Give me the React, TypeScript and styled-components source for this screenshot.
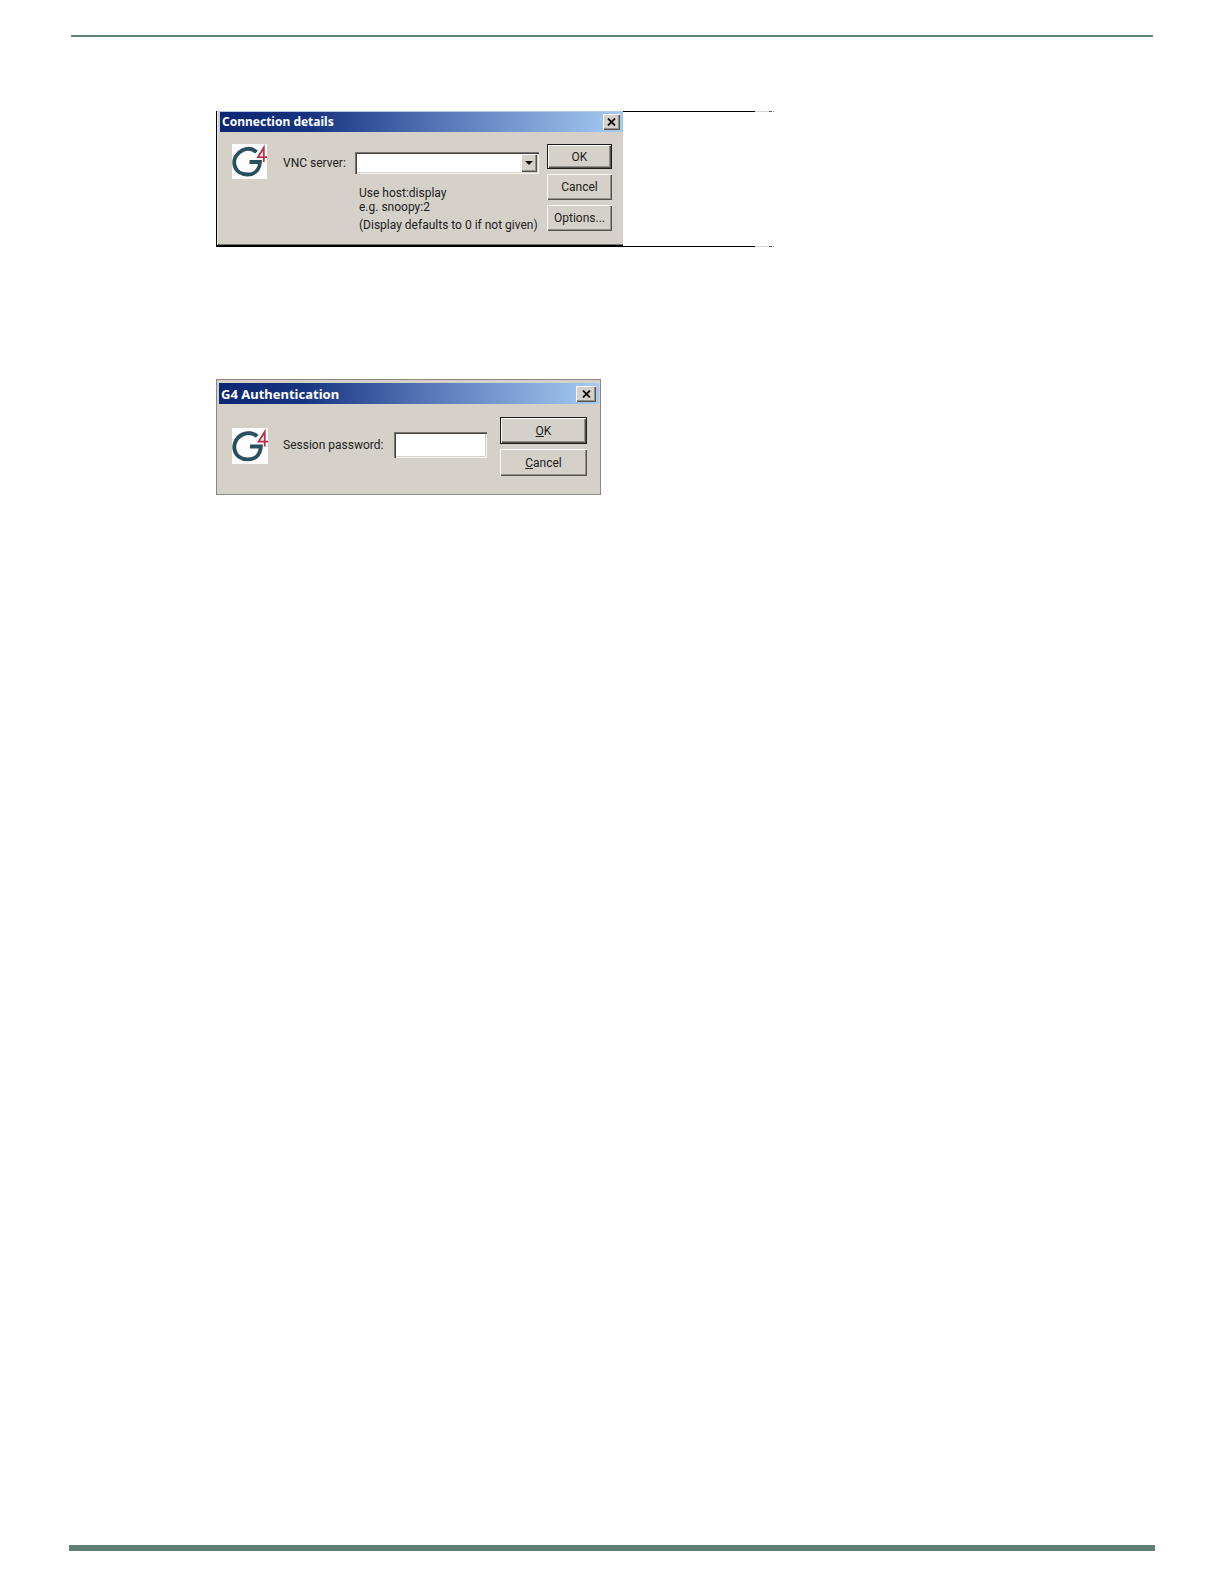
import React from "react";
import styled, { createGlobalStyle } from "styled-components";

const GlobalStyle = createGlobalStyle`
  *, *::before, *::after { box-sizing: border-box; }
  body { margin: 0; background: #fff; }
`;

const Page = styled.div`
  display: flex;
  flex-direction: column;
  min-height: 100vh;
  padding: 35px 69px 33px;
  color: #1c1c1c;
  font-family: Roboto, "Liberation Sans", sans-serif;
  font-size: 12px;
  line-height: 14px;
`;

const HeaderRule = styled.header`
  height: 2px;
  margin: 0 2px;
  background: #5f8473;
`;

const FooterRule = styled.footer`
  height: 6px;
  background: #5f7f75;
`;

const Content = styled.main`
  display: flex;
  flex: 1;
  flex-direction: column;
  align-items: flex-start;
  gap: 132px;
  padding: 74px 0 74px 147px;
`;

const Figure = styled.section`
  display: flex;
`;

const FigureEdge = styled.div`
  --line: linear-gradient(90deg, #000 0 132px, #d4d4d4 132px 146px, #555 146px 149px, #fff 149px 150px, #888 150px);
  width: 151px;
  background: var(--line) top / 100% 1px no-repeat, var(--line) bottom / 100% 1px no-repeat;
`;

const Dialog = styled.form<{ $framed?: boolean }>`
  display: flex;
  flex-direction: column;
  width: ${(p) => (p.$framed ? "407px" : "385px")};
  padding: ${(p) => (p.$framed ? "1px 0 0 3px" : "3px 1px 0 2px")};
  background: #d5d1c9;
  border: 1px solid #8a8784;
  ${(p) =>
    p.$framed &&
    `
    border-color: #000;
    border-width: 0 0 2px 1px;
    box-shadow: inset 1px 0 #eceae6, inset 0 -1px #77746f, inset 0 1px #b9c6dc;
  `}
`;

const TitleBar = styled.div<{ $height: number }>`
  display: flex;
  align-items: center;
  justify-content: space-between;
  height: ${(p) => p.$height}px;
  padding: 0 3px 0 2px;
  background: linear-gradient(90deg, #0c2672 0%, #173480 22%, #5876b8 55%, #a5cbf3 100%);
`;

const Title = styled.h2<{ $size: number }>`
  margin: 0;
  color: #fff;
  font-family: "Noto Sans", "Open Sans", sans-serif;
  font-size: ${(p) => p.$size}px;
  font-weight: 700;
  line-height: 16px;
`;

const bevel = `
  border: 0;
  background: #d5d1c9;
  box-shadow: inset 1px 1px #fbfaf8, inset -1px -1px #55524e, inset -2px -2px #94918b;
`;

const CloseButton = styled.button<{ $width: number }>`
  ${bevel}
  display: grid;
  place-items: center;
  width: ${(p) => p.$width}px;
  height: 16px;
  padding: 0;
`;

const PushButton = styled.button<{ $primary?: boolean; $height: number }>`
  ${bevel}
  height: ${(p) => p.$height}px;
  padding: 0;
  color: inherit;
  font: inherit;
  ${(p) =>
    p.$primary &&
    `
    border: 1px solid #1e1c1a;
  `}
`;

const ButtonStack = styled.div<{ $width: number }>`
  display: flex;
  flex-direction: column;
  gap: 5px;
  width: ${(p) => p.$width}px;
  margin-left: auto;
`;

const ConnectionBody = styled.div`
  display: flex;
  align-items: flex-start;
  padding: 12px 11px 13px 12px;
`;

const AuthBody = styled.div`
  display: flex;
  align-items: flex-start;
  padding: 13px 12px 18px 13px;
`;

const LogoSlot = styled.div<{ $top: number }>`
  display: flex;
  padding-top: ${(p) => p.$top}px;
`;

const FieldArea = styled.div`
  display: grid;
  grid-template-columns: 72px 184px;
  row-gap: 12px;
  padding: 8px 0 0 16px;
`;

const PasswordArea = styled.div`
  display: grid;
  grid-template-columns: 111px 93px;
  padding: 15px 0 0 15px;
`;

const Label = styled.label`
  align-self: center;
  white-space: nowrap;
`;

const sunken = `
  border: 0;
  border-radius: 0;
  outline: 0;
  background: #fff;
  box-shadow: inset 1px 1px #77746f, inset 2px 2px #45423f, inset -1px -1px #f6f5f2, inset -2px -2px #d5d1c9;
`;

const Combo = styled.div`
  position: relative;
  display: flex;
`;

const ServerSelect = styled.select`
  ${sunken}
  appearance: none;
  width: 100%;
  height: 22px;
  padding: 0 20px 0 5px;
  font: inherit;
`;

const ComboArrow = styled.span`
  ${bevel}
  position: absolute;
  top: 2px;
  right: 2px;
  bottom: 2px;
  display: grid;
  place-items: center;
  width: 16px;
  pointer-events: none;
`;

const PasswordInput = styled.input`
  ${sunken}
  width: 100%;
  height: 26px;
  padding: 0 5px;
  font: inherit;
`;

const Hint = styled.div`
  grid-column: 2;
  padding-left: 4px;
  white-space: nowrap;
`;

const HintLine = styled.p`
  margin: 0;

  &:last-child {
    margin-top: 4px;
  }
`;

function Logo({ size }: { size: number }) {
  return (
    <svg width={size} height={size} viewBox="0 0 35 35" role="img" aria-label="G4">
      <rect width="35" height="35" fill="#fdfdfd" />
      <path
        d="M24.5 8.2C21 4.8 15.5 4 10.5 6.2C4.5 9 1.2 15 2.5 21C3.7 27 9 30.5 15.5 30.5C22 30.5 27.5 26.5 28 18H17.5"
        fill="none"
        stroke="#29505f"
        strokeWidth="3.8"
      />
      <path d="M31.8 18V3.6L26 13.2H35" fill="none" stroke="#b9304a" strokeWidth="1.8" />
    </svg>
  );
}

function CrossIcon() {
  return (
    <svg width="9" height="8" viewBox="0 0 9 8" aria-hidden="true">
      <path d="M1 0.5L8 7.5M8 0.5L1 7.5" stroke="#111" strokeWidth="1.8" />
    </svg>
  );
}

export default function App() {
  return (
    <>
      <GlobalStyle />
      <Page>
        <HeaderRule />
        <Content>
          <Figure>
            <Dialog $framed aria-labelledby="connection-title">
              <TitleBar $height={20}>
                <Title id="connection-title" $size={12}>Connection details</Title>
                <CloseButton type="button" $width={17} aria-label="Close">
                  <CrossIcon />
                </CloseButton>
              </TitleBar>
              <ConnectionBody>
                <LogoSlot $top={0}>
                  <Logo size={35} />
                </LogoSlot>
                <FieldArea>
                  <Label htmlFor="server">VNC server:</Label>
                  <Combo>
                    <ServerSelect id="server" defaultValue="">
                      <option value="" />
                    </ServerSelect>
                    <ComboArrow>
                      <svg width="8" height="4" viewBox="0 0 8 4" aria-hidden="true">
                        <path d="M0 0H8L4 4Z" fill="#111" />
                      </svg>
                    </ComboArrow>
                  </Combo>
                  <Hint>
                    <HintLine>Use host:display</HintLine>
                    <HintLine>e.g. snoopy:2</HintLine>
                    <HintLine>(Display defaults to 0 if not given)</HintLine>
                  </Hint>
                </FieldArea>
                <ButtonStack $width={65}>
                  <PushButton type="button" $primary $height={25}>OK</PushButton>
                  <PushButton type="button" $height={26}>Cancel</PushButton>
                  <PushButton type="button" $height={26}>Options...</PushButton>
                </ButtonStack>
              </ConnectionBody>
            </Dialog>
            <FigureEdge />
          </Figure>

          <Dialog aria-labelledby="auth-title">
            <TitleBar $height={21}>
              <Title id="auth-title" $size={13}>G4 Authentication</Title>
              <CloseButton type="button" $width={20} aria-label="Close">
                <CrossIcon />
              </CloseButton>
            </TitleBar>
            <AuthBody>
              <LogoSlot $top={11}>
                <Logo size={36} />
              </LogoSlot>
              <PasswordArea>
                <Label htmlFor="password">Session password:</Label>
                <PasswordInput id="password" type="password" />
              </PasswordArea>
              <ButtonStack $width={87}>
                <PushButton type="button" $primary $height={27}>
                  <u>O</u>K
                </PushButton>
                <PushButton type="button" $height={27}>
                  <u>C</u>ancel
                </PushButton>
              </ButtonStack>
            </AuthBody>
          </Dialog>
        </Content>
        <FooterRule />
      </Page>
    </>
  );
}
